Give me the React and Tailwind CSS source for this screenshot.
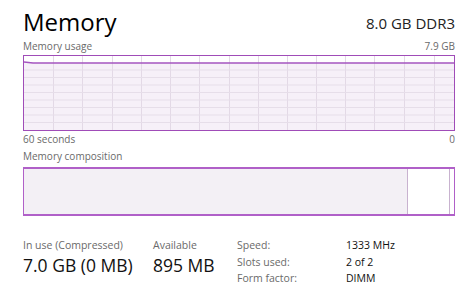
export default function App() {
  const vLines = [53, 82, 112, 141, 170, 199, 229, 258, 287, 316, 345, 374, 404, 434];
  const hLines = [70, 77.5, 85, 92.5, 100, 107.5, 115, 122.5];

  return (
    <div className="w-[474px] h-[298px] bg-white pl-[23px] pr-[19px] font-['Open_Sans',sans-serif] text-[#1a1a1a] overflow-hidden">
      <div className="flex items-end justify-between h-[34px]">
        <div className="text-[24px] font-normal leading-none text-black">Memory</div>
        <div className="text-[15px] leading-none text-[#222] mb-[3px]">8.0 GB DDR3</div>
      </div>

      <div className="flex justify-between mt-[7px] text-[10px] leading-none text-[#6a6a6a]">
        <span>Memory usage</span>
        <span>7.9 GB</span>
      </div>

      <svg className="block mt-[4px]" width="432" height="76" viewBox="0 0 432 76">
        <rect x="0" y="8" width="432" height="68" fill="#f6f0f8" />
        {vLines.map((x) => (
          <line key={x} x1={x - 23 + 0.5} y1="1" x2={x - 23 + 0.5} y2="75" stroke="#e3d9e6" strokeWidth="1" />
        ))}
        {hLines.map((y) => (
          <line key={y} x1="1" y1={y - 55} x2="431" y2={y - 55} stroke="#e6dee9" strokeWidth="1" />
        ))}
        <polyline points="1,7 10,8 431,8" fill="none" stroke="#a555c0" strokeWidth="1.5" />
        <rect x="0.5" y="0.5" width="431" height="75" fill="none" stroke="#a04cb8" strokeWidth="1" />
      </svg>

      <div className="flex justify-between mt-[3px] text-[10px] leading-none text-[#6a6a6a]">
        <span>60 seconds</span>
        <span>0</span>
      </div>

      <div className="mt-[7px] text-[10px] leading-none text-[#6a6a6a]">Memory composition</div>

      <div className="mt-[6px] w-[432px] h-[49px] border border-[#b060c8] border-b-2 border-t-2 flex">
        <div className="w-[384px] h-full bg-[#f3f0f5] border-r border-[#c8b2cf]" />
        <div className="w-[42px] h-full bg-white border-r border-[#c8b2cf]" />
        <div className="flex-1 h-full bg-white" />
      </div>

      <div className="flex mt-[24px]">
        <div className="w-[130px]">
          <div className="text-[10.5px] leading-none text-[#6a6a6a]">In use (Compressed)</div>
          <div className="mt-[6px] text-[17.5px] leading-none text-[#111]">7.0 GB (0 MB)</div>
        </div>
        <div className="w-[84px]">
          <div className="text-[10.5px] leading-none text-[#6a6a6a]">Available</div>
          <div className="mt-[6px] text-[17.5px] leading-none text-[#111]">895 MB</div>
        </div>
        <div className="grid grid-cols-[109px_auto] gap-y-[6px] text-[10.5px] leading-none">
          <span className="text-[#6a6a6a]">Speed:</span>
          <span className="text-[#111]">1333 MHz</span>
          <span className="text-[#6a6a6a]">Slots used:</span>
          <span className="text-[#111]">2 of 2</span>
          <span className="text-[#6a6a6a]">Form factor:</span>
          <span className="text-[#111]">DIMM</span>
        </div>
      </div>
    </div>
  );
}
